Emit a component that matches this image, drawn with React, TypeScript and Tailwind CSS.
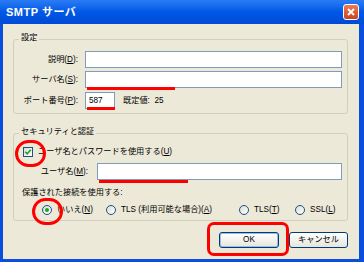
import React from "react";

const font = {
  fontFamily: '"Liberation Sans", "Noto Sans CJK JP", sans-serif',
};

function Input({ className = "", value }: { className?: string; value?: string }) {
  return (
    <div
      className={`h-[17px] border border-[#7f9db9] bg-white flex items-center pl-[3px] ${className}`}
    >
      {value}
    </div>
  );
}

function Radio({ checked }: { checked?: boolean }) {
  return (
    <span className="w-[10px] h-[10px] rounded-full border border-[#1c5180] bg-linear-to-br from-[#dcdcd7] to-white flex items-center justify-center shrink-0">
      {checked && <span className="w-[4px] h-[4px] rounded-full bg-[#21a121]" />}
    </span>
  );
}

function Group({
  title,
  className = "",
  children,
}: {
  title: string;
  className?: string;
  children: React.ReactNode;
}) {
  return (
    <div className={`relative border border-[#d0d0bf] rounded-[3px] ${className}`}>
      <span className="absolute left-[5px] top-[-8px] px-[2px] leading-[12px] bg-[#ece9d8]">
        {title}
      </span>
      {children}
    </div>
  );
}

export default function App() {
  return (
    <div
      className="relative w-[364px] h-[262px] flex flex-col bg-[#0a4ede] overflow-hidden text-[8.2px] leading-[12px] text-black"
      style={font}
    >
      {/* title bar */}
      <div className="h-[24px] flex items-center justify-between pl-[6px] pr-[5px] bg-linear-to-b from-[#2a7cf5] via-[#0058e6] to-[#0049d4]">
        <span className="text-white font-bold text-[11px] leading-none tracking-[0.5px]">
          SMTP サーバ
        </span>
        <span className="w-[16px] h-[16px] rounded-[3px] border border-white bg-linear-to-b from-[#ec7b55] to-[#c8431f] flex items-center justify-center">
          <svg width="10" height="10" viewBox="0 0 10 10">
            <path d="M2 2 L8 8 M8 2 L2 8" stroke="white" strokeWidth="1.8" />
          </svg>
        </span>
      </div>

      {/* body */}
      <div className="flex-1 ml-[3px] mr-[5px] mb-[3px] bg-[#ece9d8] flex flex-col pl-[10px] pr-[11px]">
        <Group title="設定" className="mt-[15px] h-[75px] pt-[11px] pr-[5px]">
          <div className="flex items-center h-[17px]">
            <span className="w-[64px] text-right">
              説明(<u>D</u>):
            </span>
            <Input className="ml-[7px] flex-1" />
          </div>
          <div className="flex items-center h-[17px] mt-[3px]">
            <span className="w-[64px] text-right">
              サーバ名(<u>S</u>):
            </span>
            <Input className="ml-[7px] flex-1" />
          </div>
          <div className="flex items-center h-[17px] mt-[4px]">
            <span className="w-[64px] text-right">
              ポート番号(<u>P</u>):
            </span>
            <Input className="ml-[7px] w-[30px]" value="587" />
            <span className="ml-[8px]">既定値:&nbsp;&nbsp;25</span>
          </div>
        </Group>

        <Group title="セキュリティと認証" className="mt-[19px] h-[88px] pt-[12px] pr-[5px]">
          <div className="flex items-center h-[12px] pl-[9px]">
            <span className="w-[10px] h-[10px] border border-[#1c5180] bg-linear-to-br from-[#dcdcd7] to-white flex items-center justify-center">
              <svg width="8" height="8" viewBox="0 0 8 8">
                <path d="M1.2 3.8 L3.2 5.8 L6.8 1.8" stroke="#21a121" strokeWidth="1.6" fill="none" />
              </svg>
            </span>
            <span className="ml-[5px]">
              ユーザ名とパスワードを使用する(<u>U</u>)
            </span>
          </div>
          <div className="flex items-center h-[17px] mt-[5px]">
            <span className="w-[74px] text-right">
              ユーザ名(<u>M</u>):
            </span>
            <Input className="ml-[9px] flex-1" />
          </div>
          <div className="h-[12px] mt-[7px] pl-[8px]">保護された接続を使用する:</div>
          <div className="flex items-center h-[12px] mt-[5px] pl-[28px]">
            <span className="w-[64px] flex items-center gap-[5px]">
              <Radio checked />
              <span>
                いいえ(<u>N</u>)
              </span>
            </span>
            <span className="w-[133px] flex items-center gap-[5px]">
              <Radio />
              <span>
                TLS (利用可能な場合)(<u>A</u>)
              </span>
            </span>
            <span className="w-[56px] flex items-center gap-[5px]">
              <Radio />
              <span>
                TLS(<u>T</u>)
              </span>
            </span>
            <span className="flex items-center gap-[5px]">
              <Radio />
              <span>
                SSL(<u>L</u>)
              </span>
            </span>
          </div>
        </Group>

        <div className="flex justify-end gap-[10px] mt-[11px]">
          <button className="w-[60px] h-[16px] rounded-[3px] border border-[#003c74] bg-linear-to-b from-white to-[#e6e5dc] shadow-[inset_0_0_0_1px_#9ab8f3] leading-none">
            OK
          </button>
          <button className="w-[59px] h-[16px] rounded-[3px] border border-[#003c74] bg-linear-to-b from-white to-[#e6e5dc] leading-none">
            キャンセル
          </button>
        </div>
      </div>

      {/* red annotations */}
      <div className="absolute left-[87px] top-[87px] w-[88px] h-[3px] bg-[#ff0000]" />
      <div className="absolute left-[87px] top-[107px] w-[28px] h-[3px] bg-[#ff0000]" />
      <div className="absolute left-[99px] top-[180px] w-[89px] h-[3px] bg-[#ff0000]" />
      <div className="absolute left-[15px] top-[140px] w-[31px] h-[27px] rounded-full border-[3px] border-[#ff0000]" />
      <div className="absolute left-[32px] top-[198px] w-[31px] h-[27px] rounded-full border-[3px] border-[#ff0000]" />
      <div className="absolute left-[207px] top-[222px] w-[82px] h-[34px] rounded-[7px] border-[3px] border-[#ff0000]" />
    </div>
  );
}
